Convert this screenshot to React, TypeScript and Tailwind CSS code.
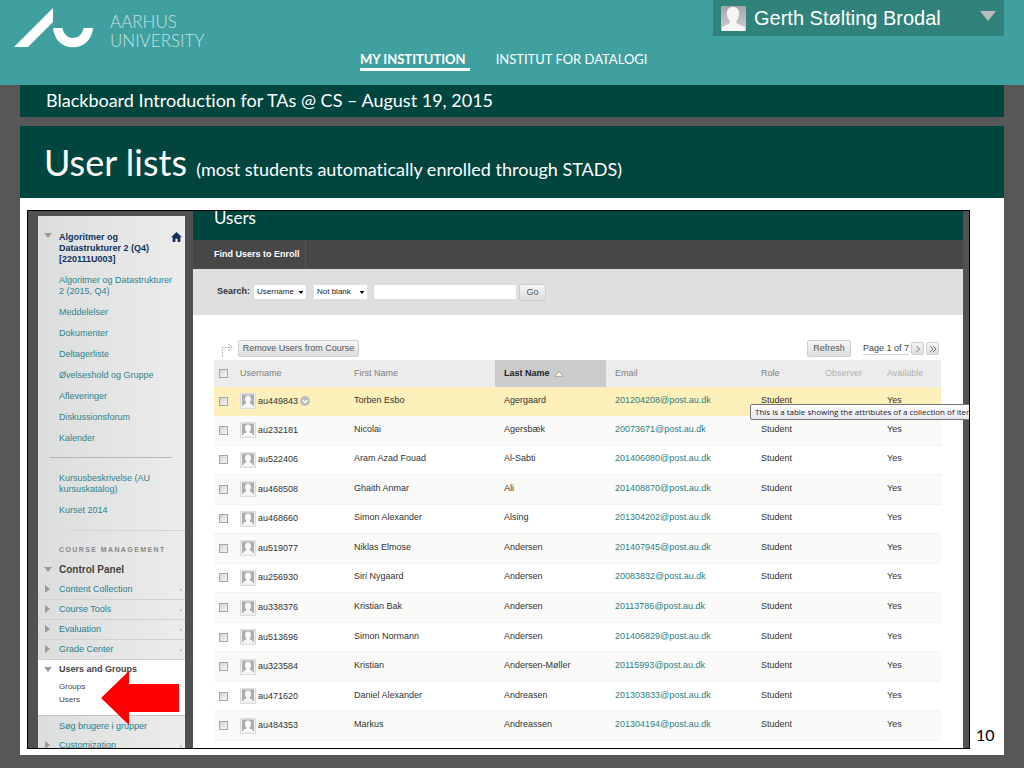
import React from 'react';

const users = [
  ['au449843', 'Torben Esbo', 'Agergaard', '201204208@post.au.dk'],
  ['au232181', 'Nicolai', 'Agersbæk', '20073671@post.au.dk'],
  ['au522406', 'Aram Azad Fouad', 'Al-Sabti', '201406080@post.au.dk'],
  ['au468508', 'Ghaith Anmar', 'Ali', '201408870@post.au.dk'],
  ['au468660', 'Simon Alexander', 'Alsing', '201304202@post.au.dk'],
  ['au519077', 'Niklas Elmose', 'Andersen', '201407945@post.au.dk'],
  ['au256930', 'Siri Nygaard', 'Andersen', '20083832@post.au.dk'],
  ['au338376', 'Kristian Bak', 'Andersen', '20113786@post.au.dk'],
  ['au513696', 'Simon Normann', 'Andersen', '201406829@post.au.dk'],
  ['au323584', 'Kristian', 'Andersen-Møller', '20115993@post.au.dk'],
  ['au471620', 'Daniel Alexander', 'Andreasen', '201303833@post.au.dk'],
  ['au484353', 'Markus', 'Andreassen', '201304194@post.au.dk'],
];

const courseLinks = [
  'Algoritmer og Datastrukturer 2 (2015, Q4)',
  'Meddelelser',
  'Dokumenter',
  'Deltagerliste',
  'Øvelseshold og Gruppe',
  'Afleveringer',
  'Diskussionsforum',
  'Kalender',
];

function Avatar({ className }: { className: string }) {
  return (
    <svg viewBox="0 0 25 25" className={className} aria-hidden="true">
      <defs>
        <linearGradient id="avatarBg" x1="0" y1="0" x2="0" y2="1">
          <stop offset="0" stopColor="#a5a5a5" />
          <stop offset="1" stopColor="#d0d0d0" />
        </linearGradient>
      </defs>
      <rect width="25" height="25" rx="1" fill="url(#avatarBg)" />
      <path
        d="M12 1c4 0 6.200 2.600 6.200 6.500 0 3-1 5.500-2.700 7.200v2.600c2.600 1.600 6 2.400 8.500 4.200V25H1v-3.500c2-1.800 5.300-2.600 7.700-4.200v-2.600C7 13 5.800 10.500 5.800 7.500 5.800 3.600 8 1 12 1z"
        fill="#f6f6f6"
      />
    </svg>
  );
}

function SmallAvatar() {
  return (
    <svg viewBox="0 0 16 16" className="h-4 w-4 shrink-0" aria-hidden="true">
      <rect x=".5" y=".5" width="15" height="15" fill="#f1f1f1" stroke="#dcdcdc" />
      <rect x="2" y="1.500" width="12" height="11.500" fill="#adadad" />
      <path d="M8 2.500c2.200 0 3 1.400 3 3.300 0 1.600-.5 2.900-1.200 3.700v1l2.700 1.300V13h-9v-1.200l2.700-1.300v-1C5.500 8.700 5 7.400 5 5.800c0-1.900.8-3.300 3-3.300z" fill="#f8f8f8" />
    </svg>
  );
}

function Down({ className }: { className: string }) {
  return (
    <svg viewBox="0 0 8 5" className={className} aria-hidden="true">
      <path d="M0 0h8L4 5z" fill="currentColor" />
    </svg>
  );
}

function Right() {
  return (
    <svg viewBox="0 0 5 8" className="h-2 w-[5px] text-[#999999]" aria-hidden="true">
      <path d="M0 0l5 4-5 4z" fill="currentColor" />
    </svg>
  );
}

function Checkbox({ label }: { label: string }) {
  return (
    <input
      type="checkbox"
      aria-label={label}
      className="block h-[9px] w-[9px] appearance-none border border-[#a3a5a6] bg-linear-to-br from-[#d2d4d6] to-[#f7f7f7]"
    />
  );
}

function ToolItem({ label }: { label: string }) {
  return (
    <li className="flex h-5 items-center border-b border-[#d0d2d2]">
      <span className="flex w-[21px] pb-[2px] pl-[7px]">
        <Right />
      </span>
      <a href="#" className="flex-1 text-[#2b7d8c]">
        {label}
      </a>
      <span className="mr-[3px] h-[2px] w-[2px] bg-[#c4c4c4]" />
    </li>
  );
}

function Sidebar() {
  return (
    <nav className="mt-[5px] flex w-[147px] shrink-0 flex-col bg-linear-to-r from-[#dcdddd] to-[#ececec] text-[9px] leading-[11px]">
      <div className="flex pt-4 font-bold text-[#10325c]">
        <span className="flex w-[21px] shrink-0 pt-px pl-[6px]">
          <Down className="h-[5px] w-2 text-[#999999]" />
        </span>
        <span className="w-[104px]">Algoritmer og Datastrukturer 2 (Q4) [220111U003]</span>
        <svg viewBox="0 0 20 18" className="ml-auto mr-[3px] h-[10px] w-[11px]" aria-label="Course home">
          <path d="M10 0l10 9.500h-3V18h-5v-6H8v6H3V9.500H0z" fill="#10325c" />
        </svg>
      </div>
      <ul className="flex flex-col gap-[10px] pt-[10px] pl-[21px] text-[#2f828e]">
        {courseLinks.map((l) => (
          <li key={l} className="w-[118px]">
            <a href="#">{l}</a>
          </li>
        ))}
      </ul>
      <hr className="mt-[13px] mr-[13px] ml-3 border-t border-[#b5b5b5]" />
      <ul className="flex flex-col gap-[10px] pt-[15px] pl-[21px] text-[#2f828e]">
        <li className="w-[100px]">
          <a href="#">Kursusbeskrivelse (AU kursuskatalog)</a>
        </li>
        <li>
          <a href="#">Kurset 2014</a>
        </li>
      </ul>
      <hr className="mt-[14px] ml-8 border-t border-[#d3d5d5]" />
      <h3 className="pt-[13px] pl-[21px] text-[7px] font-bold tracking-[0.2em] text-[#888888]">COURSE MANAGEMENT</h3>
      <div className="flex items-center pt-[10px] text-[10px] leading-[10px] font-bold text-[#444444]">
        <span className="flex w-[21px] pb-px pl-[6px]">
          <Down className="h-[5px] w-2 text-[#999999]" />
        </span>
        Control Panel
      </div>
      <ul className="pt-[5px]">
        <ToolItem label="Content Collection" />
        <ToolItem label="Course Tools" />
        <ToolItem label="Evaluation" />
        <ToolItem label="Grade Center" />
      </ul>
      <div className="relative border-b border-[#c5c5c5] bg-white pt-1 pb-[9px] text-[#444444]">
        <div className="flex items-center font-bold">
          <span className="flex w-[21px] pb-px pl-[6px]">
            <Down className="h-[5px] w-2 text-[#999999]" />
          </span>
          Users and Groups
        </div>
        <ul className="pt-[5px] pl-[21px] text-[8px] leading-[13px]">
          <li>
            <a href="#">Groups</a>
          </li>
          <li>
            <a href="#">Users</a>
          </li>
        </ul>
        <svg viewBox="0 0 78 54" className="absolute top-[11px] right-[6px] z-10 h-[54px] w-[78px]" aria-hidden="true">
          <path d="M0 27L28 0v13h50v28H28v13z" fill="#ff0000" />
        </svg>
      </div>
      <ul>
        <li className="flex h-5 items-center pl-[21px] text-[#2b7d8c]">
          <a href="#">Søg brugere i grupper</a>
        </li>
        <ToolItem label="Customization" />
      </ul>
    </nav>
  );
}

const buttonStyle =
  'flex items-center justify-center rounded-xs border border-[#cfcfcf] bg-linear-to-b from-[#f6f6f6] to-[#dddddd] text-[9px] leading-none text-[#555555]';

function Picker({ label, value, width }: { label: string; value: string; width: string }) {
  return (
    <span className={'relative flex items-center ' + width}>
      <select
        aria-label={label}
        className="h-[14px] w-full appearance-none rounded-none bg-white pl-[3px] text-[8px] leading-[14px] text-[#222222]"
      >
        <option>{value}</option>
      </select>
      <Down className="pointer-events-none absolute right-[2px] h-[3px] w-[6px] text-black" />
    </span>
  );
}

function UsersPanel() {
  return (
    <section className="min-w-0 flex-1 bg-white">
      <h2 className="h-[29px] bg-[#00463f] pl-[21px] font-['Lato',sans-serif] text-[17px] leading-[14px] text-white">Users</h2>
      <div className="flex h-[29px] bg-[#474747] text-[9px] font-bold text-white">
        <a href="#" className="flex items-center border-r border-[#575757] pr-[5px] pl-[21px]">
          Find Users to Enroll
        </a>
      </div>
      <form className="flex h-[46px] items-center bg-[#dfdfdf] pl-6" onSubmit={(e) => e.preventDefault()}>
        <label htmlFor="search" className="w-[37px] text-[9px] font-bold text-[#333333]">
          Search:
        </label>
        <Picker label="Search field" value="Username" width="w-[52px]" />
        <span className="w-2" />
        <Picker label="Search operator" value="Not blank" width="w-[53px]" />
        <input id="search" className="ml-[7px] h-[14px] w-[142px] bg-white px-1 text-[9px]" />
        <button className={buttonStyle + ' ml-[3px] h-[17px] w-[27px]'}>Go</button>
      </form>
      <div className="mr-[22px] ml-[21px]">
        <div className="flex items-center pt-[25px] pb-[3px]">
          <svg viewBox="0 0 14 14" className="mr-1 ml-[6px] h-[14px] w-[14px] self-end" fill="none" stroke="#b5b5b5" aria-hidden="true">
            <path d="M2.500 14V4.500H12" strokeDasharray="2 1" />
            <path d="M8.500 1l3.500 3.500L8.500 8" />
          </svg>
          <button className={buttonStyle + ' h-[17px] w-[121px]'}>Remove Users from Course</button>
          <button className={buttonStyle + ' ml-auto h-[17px] w-[44px]'}>Refresh</button>
          <span className="ml-3 border-b border-[#d5d5d5] text-[9px] leading-[12px] text-[#444444]">Page 1 of 7</span>
          <button aria-label="Next page" className={buttonStyle + ' ml-[2px] h-[13px] w-[13px]'}>
            <svg viewBox="0 0 8 8" className="h-2 w-2" fill="none" stroke="#777777" aria-hidden="true">
              <path d="M2.500 1l3 3-3 3" />
            </svg>
          </button>
          <button aria-label="Last page" className={buttonStyle + ' mr-[2px] ml-[2px] h-[13px] w-[13px]'}>
            <svg viewBox="0 0 8 8" className="h-2 w-2" fill="none" stroke="#777777" aria-hidden="true">
              <path d="M1 1l3 3-3 3M4 1l3 3-3 3" />
            </svg>
          </button>
        </div>
        <table className="h-[381px] w-full table-fixed text-left text-[9px] leading-[11px] text-[#333333]">
          <colgroup>
            <col className="w-[22px]" />
            <col className="w-[109px]" />
            <col className="w-[150px]" />
            <col className="w-[111px]" />
            <col className="w-[146px]" />
            <col className="w-[64px]" />
            <col className="w-[62px]" />
            <col className="w-[63px]" />
          </colgroup>
          <thead>
            <tr className="h-[27px] bg-[#ececec] text-[#808080] [&>th]:font-normal">
              <th className="pl-[5px]">
                <Checkbox label="Select all users" />
              </th>
              <th className="pl-1">Username</th>
              <th className="pl-[9px]">First Name</th>
              <th className="bg-[#cbcbcb] pl-[9px] text-[#222222]">
                <span className="flex items-center gap-1 font-bold">
                  Last Name
                  <svg viewBox="0 0 10 6" className="h-[6px] w-[10px]" aria-hidden="true">
                    <path d="M.7 5.400L5 .7l4.300 4.700z" fill="#fdf6dc" stroke="#9c9477" strokeWidth=".7" />
                  </svg>
                </span>
              </th>
              <th className="pl-[9px]">Email</th>
              <th className="pl-[9px]">Role</th>
              <th className="pl-[9px] text-[#b0b0b0]">Observer</th>
              <th className="pl-[9px] text-[#b0b0b0]">Available</th>
            </tr>
          </thead>
          <tbody>
            {users.map(([id, first, last, email], i) => (
              <tr
                key={id}
                className={
                  i === 0
                    ? 'border-b border-[#fdf0ba] bg-[#fdf0ba]'
                    : i % 2
                      ? 'border-b border-[#f3f3f1] bg-[#fafaf9]'
                      : 'border-b border-[#f3f3f1]'
                }
              >
                <td className="pl-[5px]">
                  <Checkbox label={'Select ' + id} />
                </td>
                <td className="pl-1">
                  <span className="flex items-center gap-[2px]">
                    <SmallAvatar />
                    {id}
                    {i === 0 && (
                      <svg viewBox="0 0 10 10" className="h-[10px] w-[10px]" aria-hidden="true">
                        <circle cx="5" cy="5" r="5" fill="#bdbdb8" />
                        <path d="M2.500 4L5 6.500 7.500 4" fill="none" stroke="#fff" strokeWidth="1.300" />
                      </svg>
                    )}
                  </span>
                </td>
                <td className="pb-[2px] pl-[9px]">{first}</td>
                <td className="pb-[2px] pl-[9px]">{last}</td>
                <td className="pb-[2px] pl-[9px]">
                  <a href="#" className="text-[#2c8085]">
                    {email}
                  </a>
                </td>
                <td className="pb-[2px] pl-[9px]">Student</td>
                <td />
                <td className="pb-[2px] pl-[9px]">Yes</td>
              </tr>
            ))}
          </tbody>
        </table>
      </div>
    </section>
  );
}

export default function App() {
  return (
    <div className="flex h-screen flex-col bg-[#575757] font-['Liberation_Sans',Arial,sans-serif]">
      <header className="flex h-[85px] shrink-0 bg-[#3fa09f] text-white">
        <div className="flex w-[360px] gap-4 pt-2 pl-[14px]">
          <svg viewBox="0 0 80 40" className="h-10 w-20" fill="#fff" aria-label="AU">
            <path d="M0 39L39 0v14L14 39z" />
            <path d="M39 20h9.500c1 6 5 10 10.500 10s9.500-4 10.500-10H79c-1 11.500-9 19.300-20 19.300S40 31.500 39 20z" />
          </svg>
          <span className="pt-1 font-['Lato',sans-serif] text-[17px] leading-[19px] font-light text-[#c4e2e2]">
            AARHUS
            <br />
            UNIVERSITY
          </span>
        </div>
        <nav className="flex items-start gap-[26px] pt-[51px] font-['Lato',sans-serif] text-[13px] leading-[17px]">
          <a href="#" className="border-b-[3px] border-white pr-1 font-bold">
            MY INSTITUTION
          </a>
          <a href="#">INSTITUT FOR DATALOGI</a>
        </nav>
        <button className="mr-5 ml-auto flex h-9 w-[291px] items-center bg-[#30827a] px-2 text-[20px]">
          <Avatar className="h-[25px] w-[25px]" />
          <span className="ml-2">Gerth Stølting Brodal</span>
          <Down className="mb-1 ml-auto h-[10px] w-4 text-[#b9bcbc]" />
        </button>
      </header>
      <main className="mx-5 mb-[13px] flex min-h-0 flex-1 flex-col text-white">
        <p className="h-8 shrink-0 bg-[#00463f] pl-[26px] font-['Lato',sans-serif] text-[18px] leading-[30px] [font-variant-ligatures:none]">
          Blackboard Introduction for TAs @ CS – August 19, 2015
        </p>
        <h1 className="mt-[9px] h-[72px] shrink-0 bg-[#00463f] pl-6 font-['Lato',sans-serif] text-[36px] leading-[72px] [font-variant-ligatures:none]">
          User lists <span className="text-[18px]">(most students automatically enrolled through STADS)</span>
        </h1>
        <div className="flex min-h-0 flex-1 bg-white pt-3 pb-[6px] pl-[7px]">
          <div className="relative flex min-w-0 flex-1 overflow-hidden border border-black bg-[#515151] pr-[6px] pl-[10px]">
            <Sidebar />
            <div className="w-2 shrink-0" />
            <UsersPanel />
            <div
              role="tooltip"
              className="absolute top-[193px] -right-1 w-[223px] overflow-hidden rounded-xs border border-[#767676] bg-linear-to-b from-white to-[#e6e6f0] pl-1 font-['Open_Sans',sans-serif] text-[8px] leading-[14px] whitespace-nowrap text-[#222222]"
            >
              This is a table showing the attributes of a collection of items
            </div>
          </div>
          <div className="flex w-[34px] shrink-0 items-end justify-start pb-1 pl-[6px] font-['Lato',sans-serif] text-[16px] leading-5 text-black">
            10
          </div>
        </div>
      </main>
    </div>
  );
}
